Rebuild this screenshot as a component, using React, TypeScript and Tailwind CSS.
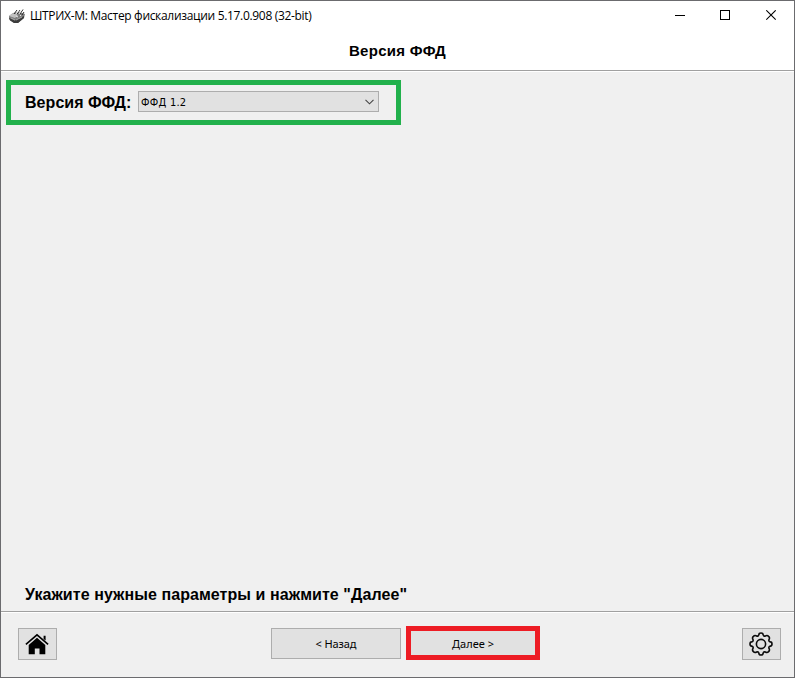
import React, { useState } from 'react';

const navButton = 'flex items-center justify-center bg-[#e1e1e1] border border-[#adadad]';

function AppIcon() {
  return (
    <svg width="16" height="16" viewBox="0 0 16 16" className="shrink-0">
      <path d="M0 8 L4 5 L10 4 L16 6 L15 10 L9 15 L5 15 L0 11 Z" fill="#7d7d7d" />
      <path d="M0 8 L4 5 L9 7 L6 10 Z" fill="#c0c0c0" />
      <path d="M0 10 L6 12.5 L15 8 L15 10 L9 15 L5 15 L1 12.5 Z" fill="#3c3c3c" />
      <path d="M2 10 L6 12 M7 12 L13 9" stroke="#a8a8a8" strokeWidth="1" />
      <path d="M5 6 L8 2 M8 6 L11 2 M11 6 L14 1.5 M13 7 L15 4" stroke="#292929" strokeWidth="1" fill="none" />
      <path d="M7 6 L10 2 M10 6 L12.5 2" stroke="#f4f4f4" strokeWidth="0.9" />
      <path d="M7 8 L9 9 M11 7 L12 8" stroke="#e9e9e9" strokeWidth="1" />
    </svg>
  );
}

function HomeIcon() {
  return (
    <svg width="24" height="22" viewBox="0 0 24 22" className="mr-[2px]">
      <path d="M0.9 11.4 L12 1.9 L23.1 11.4" fill="none" stroke="#000" strokeWidth="1.6" />
      <path d="M18.6 2.8 H20.6 V7.6 L18.6 5.9 Z" fill="#000" />
      <path d="M12 4.8 L20.3 11.9 V21.3 H14.5 V15.5 H9.8 V21.3 H3.7 V11.9 Z" fill="#000" />
    </svg>
  );
}

function GearIcon() {
  return (
    <svg width="24" height="24" viewBox="0 0 24 24" fill="none" stroke="#0c0c0c" strokeWidth="1.6" strokeLinejoin="round" className="mr-[2px]">
      <path d="M12 1 Q14 1 14.1 2.6 Q14.6 4.6 16.4 4 Q18.2 2.9 19.6 4.4 Q21.1 5.8 20 7.6 Q19.4 9.4 21.4 9.9 Q23 10 23 12 Q23 14 21.4 14.1 Q19.4 14.6 20 16.4 Q21.1 18.2 19.6 19.6 Q18.2 21.1 16.4 20 Q14.6 19.4 14.1 21.4 Q14 23 12 23 Q10 23 9.9 21.4 Q9.4 19.4 7.6 20 Q5.8 21.1 4.4 19.6 Q2.9 18.2 4 16.4 Q4.6 14.6 2.6 14.1 Q1 14 1 12 Q1 10 2.6 9.9 Q4.6 9.4 4 7.6 Q2.9 5.8 4.4 4.4 Q5.8 2.9 7.6 4 Q9.4 4.6 9.9 2.6 Q10 1 12 1 Z" />
      <circle cx="12" cy="12" r="4.6" />
    </svg>
  );
}

export default function App() {
  const [version] = useState('ФФД 1.2');

  return (
    <div className="w-[795px] h-[678px] flex flex-col border border-[#6b6b6e] bg-[#f0f0f0] text-black overflow-hidden">
      {/* Title bar */}
      <div className="h-[29px] shrink-0 flex items-center bg-white pl-2">
        <AppIcon />
        <span className="ml-[5px] text-[12px] leading-4 whitespace-nowrap tracking-[-0.32px] font-['Open_Sans','Noto_Sans',sans-serif]">
          ШТРИХ-М: Мастер фискализации 5.17.0.908 (32-bit)
        </span>
        <div className="ml-auto flex">
          <button className="w-[46px] h-7 flex items-center justify-center">
            <svg width="11" height="11" shapeRendering="crispEdges"><path d="M0 5.5 H10" stroke="#000" /></svg>
          </button>
          <button className="w-[45px] h-7 flex items-center justify-center">
            <svg width="11" height="11" shapeRendering="crispEdges"><rect x="0.5" y="0.5" width="9" height="9" fill="none" stroke="#000" /></svg>
          </button>
          <button className="w-[46px] h-7 flex items-center justify-center">
            <svg width="11" height="11"><path d="M0.3 0.3 L9.7 9.7 M9.7 0.3 L0.3 9.7" stroke="#000" strokeWidth="1.1" /></svg>
          </button>
        </div>
      </div>

      {/* Page heading */}
      <div className="h-[41px] shrink-0 flex items-center justify-center bg-white border-b border-[#a0a0a0] pt-px">
        <h1 className="text-[15px] leading-5 font-bold tracking-[0.3px] font-['Liberation_Sans',sans-serif]">Версия ФФД</h1>
      </div>

      {/* Content */}
      <div className="flex-1 flex flex-col border-t border-white">
        <div className="mt-2 ml-[5px] w-[395px] h-[45px] flex items-center border-[5px] border-[#22b14c] pl-[14px]">
          <label className="w-[113px] text-[16px] leading-5 font-bold tracking-[0.05px] whitespace-nowrap font-['Liberation_Sans',sans-serif]">Версия ФФД:</label>
          <button className="w-[241px] h-[21px] mb-[2px] flex items-center justify-between bg-[#e1e1e1] border border-[#adadad] pl-[2px] pr-1">
            <span className="pt-[2px] text-[11px] leading-4 tracking-[0.25px] font-['DejaVu_Sans_Condensed','DejaVu_Sans',sans-serif]">{version}</span>
            <svg width="9" height="6" fill="none"><path d="M0.5 0.8 L4.5 4.8 L8.5 0.8" stroke="#444" strokeWidth="1.1" /></svg>
          </button>
        </div>
        <p className="mt-auto mb-[6px] ml-6 text-[16px] leading-5 font-bold tracking-[0.07px] whitespace-nowrap font-['Liberation_Sans',sans-serif]">
          Укажите нужные параметры и нажмите "Далее"
        </p>
      </div>

      {/* Footer */}
      <div className="h-[66px] shrink-0 border-t border-[#a0a0a0]">
        <div className="h-full flex items-start border-t border-white pl-[17px] pr-[13px] pt-[13px] text-[11px] font-['Noto_Sans',sans-serif]">
          <button className={`${navButton} mt-[2px] w-[39px] h-8`}>
            <HomeIcon />
          </button>
          <button className={`${navButton} mt-[2px] ml-[214px] w-[130px] h-[31px] pt-[2px] tracking-[-0.1px]`}>&lt; Назад</button>
          <button className="ml-[5px] w-[134px] h-[34px] flex items-center justify-center bg-[#e1e1e1] border-[5px] border-[#ed1c24] pt-[2px]">
            Далее &gt;
          </button>
          <button className={`${navButton} mt-[2px] ml-auto w-[39px] h-8`}>
            <GearIcon />
          </button>
        </div>
      </div>
    </div>
  );
}
